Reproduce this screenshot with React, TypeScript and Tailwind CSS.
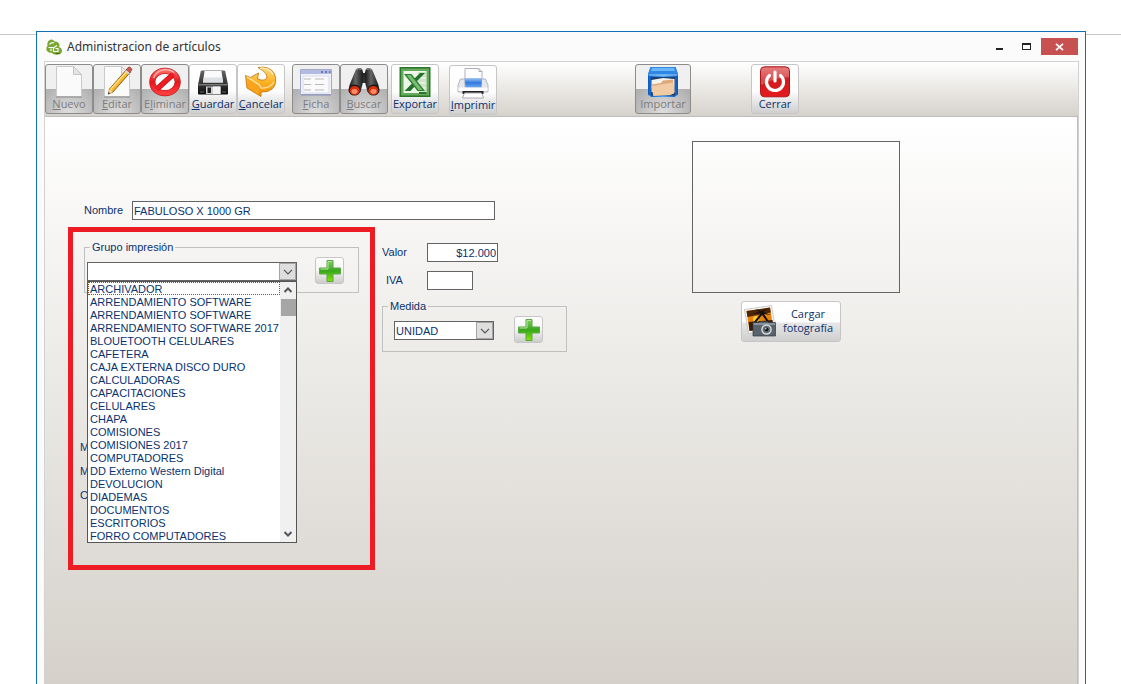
import React, { useState } from 'react';
import clsx from 'clsx';

const groups = [
  'ARCHIVADOR',
  'ARRENDAMIENTO SOFTWARE',
  'ARRENDAMIENTO SOFTWARE',
  'ARRENDAMIENTO SOFTWARE 2017',
  'BLOUETOOTH CELULARES',
  'CAFETERA',
  'CAJA EXTERNA DISCO DURO',
  'CALCULADORAS',
  'CAPACITACIONES',
  'CELULARES',
  'CHAPA',
  'COMISIONES',
  'COMISIONES 2017',
  'COMPUTADORES',
  'DD Externo Western Digital',
  'DEVOLUCION',
  'DIADEMAS',
  'DOCUMENTOS',
  'ESCRITORIOS',
  'FORRO COMPUTADORES',
];

const Svg: React.FC<{ children: React.ReactNode; className?: string }> = ({ children, className = 'h-8 w-8' }) => (
  <svg viewBox="0 0 32 32" className={clsx('block shrink-0', className)} fill="none" aria-hidden="true">
    {children}
  </svg>
);

const PaperIcon = () => (
  <Svg>
    <path d="M3.500 .5h17l8 8v22h-25z" fill="#fafafa" stroke="#c9c9c9" />
    <path d="M20.500 .5v8h8z" fill="#e6e6e6" stroke="#c4c4c4" />
    <path d="M3 31h26" stroke="#8c8c8c" />
  </Svg>
);

const EditIcon = () => (
  <Svg>
    <path d="M3.500 .5h17l8 8v22h-25z" fill="#fafafa" stroke="#c9c9c9" />
    <path d="M20.500 .5v8h8z" fill="#eee" stroke="#c4c4c4" />
    <path d="M3 31h26" stroke="#8c8c8c" />
    <path d="M8.500 23 26 3l3.500 3L12 26l-4.500 2z" fill="#f7b52c" stroke="#7d5310" strokeWidth=".9" />
    <path d="M9.500 23.500 27 4" stroke="#ffe487" strokeWidth="1.300" />
    <path d="m25 4 2-2.500q1-1 2.500 0l1 1q1 1 0 2L28.500 7z" fill="#c9574a" stroke="#7c3a30" strokeWidth=".6" />
    <path d="m23.800 5.500 1.400-1.600 3.500 3-1.400 1.600z" fill="#d4d6d9" />
    <path d="m8.300 23.300 3.500 2.700-4.600 2.300z" fill="#f3d5a5" />
    <path d="m7.600 26.300 1.600 1-2.400 1.300z" fill="#222" />
  </Svg>
);

const ForbidIcon = () => (
  <Svg>
    <defs>
      <linearGradient id="forbid" x1="0" y1="0" x2="0" y2="1">
        <stop offset="0" stopColor="#ff6a64" />
        <stop offset=".5" stopColor="#e8141b" />
        <stop offset="1" stopColor="#ff3b3e" />
      </linearGradient>
    </defs>
    <ellipse cx="16" cy="16" rx="12.500" ry="11" fill="#fff" fillOpacity=".7" />
    <ellipse cx="16" cy="16" rx="12.700" ry="11.300" stroke="#a80d12" strokeWidth="6" />
    <ellipse cx="16" cy="16" rx="12.700" ry="11.300" stroke="url(#forbid)" strokeWidth="5" />
    <path d="M8.500 22.500 23.500 9" stroke="#a80d12" strokeWidth="5.500" />
    <path d="M7.500 23.400 24.500 8.100" stroke="#ec1c22" strokeWidth="4.500" />
    <path d="M4.500 12Q8 4 16 3.600q6 0 9 3" stroke="#ffb7b2" strokeWidth="1.400" />
  </Svg>
);

const DiskIcon = () => (
  <Svg>
    <defs>
      <linearGradient id="disk" x1="0" y1="0" x2="0" y2="1">
        <stop offset="0" stopColor="#666" />
        <stop offset="1" stopColor="#0c0c0c" />
      </linearGradient>
    </defs>
    <path d="M5 4.500h22q1 0 1.300 1L31 19v8.500q0 1-1 1H2q-1 0-1-1V19L3.700 5.500q.3-1 1.300-1z" fill="url(#disk)" />
    <path d="M7.500 5h17l1.500 11.500H6z" fill="#fbfbfb" />
    <path d="M6.700 11.500h18.600l.7 5H6z" fill="#dde0e4" />
    <path d="M1.500 18.800h29" stroke="#8b8b8b" strokeWidth="1.200" />
    <path d="M9 20.500h14.500V28H9z" fill="#cfd1d2" />
    <path d="M10.500 21.500H14V27h-3.500z" fill="#222" />
    <path d="M16 20.500h7.500V28H16z" fill="#f3f3f3" />
    <path d="M3 26h4m18 0h4" stroke="#666" />
  </Svg>
);

const UndoIcon = () => (
  <Svg>
    <defs>
      <linearGradient id="undo" x1="0" y1="0" x2="0" y2="1">
        <stop offset="0" stopColor="#ffdc80" />
        <stop offset=".5" stopColor="#fdb225" />
        <stop offset="1" stopColor="#ef8c02" />
      </linearGradient>
    </defs>
    <path
      d="M13 1.500Q25-.5 29.500 8q3.500 9.500-2.500 15-4 3.500-11 3v4.500L2 22 .5 9.500l5 2L13.500 7l-1 6q6.500 2.500 9-.5Q24 7.500 13 1.500z"
      fill="url(#undo)"
      stroke="#c97b10"
      strokeWidth=".9"
      strokeLinejoin="round"
    />
    <path d="M2 11.500 14.500 19l-.8 9.500L3 21.500z" fill="#f9a41c" />
    <path d="M2 11l12.500 8 1.500 3q9 .5 13-6" stroke="#ffe9ae" strokeWidth="1.200" />
    <path d="M15 2.300q9-.8 13 6" stroke="#fff0c0" strokeWidth="1.300" />
  </Svg>
);

const FormIcon = () => (
  <Svg>
    <path d="M.5 3.500h31v25H.5z" fill="#f1f3fa" stroke="#a4aacb" />
    <path d="M1 4h30v4H1z" fill="#b4bbe0" />
    <path d="M21 6h2m2 0h2m2 0h1.500" stroke="#5962a8" strokeWidth="1.500" />
    <path d="M3 10h26v17H3z" fill="#fafafa" stroke="#d8dbea" />
    <path d="M4 13h7m4 0h9M4 18.500h7m4 0h9M4 24h7m4 0h9" stroke="#b7b9be" strokeWidth="1.200" />
    <path d="M1 29h30" stroke="#8990b5" />
  </Svg>
);

const BinocularsIcon = () => (
  <Svg>
    <defs>
      <linearGradient id="tube" x1="0" y1="0" x2="1" y2="0">
        <stop offset="0" stopColor="#111" />
        <stop offset=".45" stopColor="#666" />
        <stop offset="1" stopColor="#151515" />
      </linearGradient>
    </defs>
    <path d="M12.500 7h7v10h-7z" fill="#333" />
    <path d="M8 3.500q3-2.500 6-.5l1.500 5-1 10-2 8H.8L1.500 19 6 8z" fill="url(#tube)" />
    <path d="M18 3q3-2 6 .5L26 8l4.500 11 .7 7H19.500l-2-8-1-10z" fill="url(#tube)" />
    <path d="M8.500 3.500q2.500-1.500 5 0M18.500 3.500q2.500-1.500 5 0" stroke="#999" />
    <ellipse cx="6.500" cy="24" rx="6" ry="5.500" fill="#171717" />
    <ellipse cx="25.500" cy="24" rx="6" ry="5.500" fill="#171717" />
    <ellipse cx="6.700" cy="24.500" rx="5" ry="4.500" fill="#d9300f" />
    <ellipse cx="25.300" cy="24.500" rx="5" ry="4.500" fill="#d9300f" />
    <ellipse cx="6.500" cy="25.500" rx="3" ry="2.400" fill="#ff8a66" />
    <ellipse cx="25.500" cy="25.500" rx="3" ry="2.400" fill="#ff8a66" />
  </Svg>
);

const ExcelIcon = () => (
  <Svg>
    <path d="M.5 1h31v30H.5z" fill="#2a752c" />
    <path d="M2 2.500h28v27H2z" fill="#66a95a" />
    <path d="M4.500 5h23v22h-23z" fill="#edf6e8" />
    <path d="M19 6h8v20h-8z" fill="#cfe3c6" />
    <path d="M19 12h8m-8 5h8m-8 5h8" stroke="#f7fbf5" />
    <path d="M17.500 15.500 26 7h-5l-6 6zM13 17.500 5.500 25h6l4.500-5z" fill="#22702a" />
    <path d="M5 8h7.500L26 25h-7.500z" fill="#2a8034" />
    <path d="M7.500 9h4l12 15h-4z" fill="#7cbd72" />
    <path d="M20 26h7.500v2H20z" fill="#2a752c" />
  </Svg>
);

const PrinterIcon = () => (
  <Svg>
    <defs>
      <linearGradient id="print" x1="0" y1="0" x2="0" y2="1">
        <stop offset="0" stopColor="#a6c8f5" />
        <stop offset=".5" stopColor="#2f78dd" />
        <stop offset="1" stopColor="#6ea7f0" />
      </linearGradient>
    </defs>
    <path d="M8 1.500h14l3 3V14H8z" fill="#fdfdff" stroke="#b0b0bc" />
    <path d="M22 1.500v3h3" stroke="#a9a9b4" />
    <path d="M3.500 12H8v8h16.500v-8h4l2.500 6v7H1v-7z" fill="#e4e5ed" stroke="#a3a5b3" strokeWidth=".8" />
    <path d="M7.500 11h17.500l-1 9.500H8.500z" fill="url(#print)" />
    <path d="M1.500 20.500h29V24h-29z" fill="#fbfbfd" />
    <path d="M5.500 24h21v3h-21z" fill="#222" />
    <path d="M7.500 26h17l2 5h-21z" fill="#fff" stroke="#a9a9b4" />
  </Svg>
);

const ImportIcon = () => (
  <Svg>
    <defs>
      <linearGradient id="box" x1="0" y1="0" x2="1" y2="0">
        <stop offset="0" stopColor="#0c5cc0" />
        <stop offset=".5" stopColor="#4ba5f5" />
        <stop offset="1" stopColor="#1057b4" />
      </linearGradient>
    </defs>
    <path d="M3.500 1h25l2.500 7.500V28q0 1.500-2 1.500L28 31H4l-1-1.500q-2 0-2-1.500V8.500z" fill="url(#box)" />
    <path d="M3.500 1h25L31 8.500H1z" fill="#2f86e4" />
    <path d="M5 2h22l1 3H4z" fill="#6ab6f8" />
    <path d="M1.500 9h29" stroke="#a2d6ff" />
    <path d="M4 11h24v18.500H4z" fill="#1b3f70" />
    <path d="M4.500 14 16 12l11.500 1v13h-23z" fill="#f3f3ee" />
    <path d="M5 18.500 14 17l2-2.500 10-1 1 14-21 2z" fill="#dfa878" />
    <path d="m4.500 20 21-3.500 2 10.500-4 2-17 1z" fill="#f0cba4" />
  </Svg>
);

const PowerIcon = () => (
  <Svg>
    <defs>
      <linearGradient id="power" x1="0" y1="0" x2="0" y2="1">
        <stop offset="0" stopColor="#dd5d59" />
        <stop offset=".45" stopColor="#cf1b1d" />
        <stop offset="1" stopColor="#e5191c" />
      </linearGradient>
    </defs>
    <rect x="1.500" y=".8" width="29" height="30" rx="4" fill="url(#power)" stroke="#ad1518" />
    <path d="M2 5q0-3.500 4-3.500h20q4 0 4 3.500v6Q16 12 2 19z" fill="#fff" fillOpacity=".22" />
    <path d="M10.500 9.500a8.500 8.500 0 1 0 11 0" stroke="#fff" strokeWidth="3.200" strokeLinecap="round" />
    <path d="M16 6v9" stroke="#fff" strokeWidth="3.200" strokeLinecap="round" />
  </Svg>
);

const PhotoIcon = () => (
  <Svg>
    <path d="m.5 4.500 27-4 4 24-27 4z" fill="#f7f7f7" stroke="#b6b6b6" strokeWidth=".7" />
    <path d="m2.500 6 23.500-3.500 3.300 20L5.500 26z" fill="#e8830c" />
    <path d="m2.500 6 23.500-3.500.8 5L3.500 12z" fill="#4d2508" />
    <path d="m4.500 17 24-2 1 7.500L5.500 26z" fill="#381d08" />
    <circle cx="12" cy="14" r="3" fill="#ffcf3a" />
    <path d="M17 8 9 18l1 2 8-10 6 8h2l-6-9 7 1-8-3 4-3-6 2-5-2 3 3-7 2z" fill="#111" />
    <path d="M9 17.500h6l1-1h8l1 1h6.500V31H9z" fill="#59636d" stroke="#353c43" strokeWidth=".7" />
    <path d="M9.500 18h21.500v2H9.500z" fill="#87929c" />
    <circle cx="22.500" cy="24.500" r="5.300" fill="#d5d9dc" />
    <circle cx="22.500" cy="24.500" r="3.800" fill="#67717a" />
    <circle cx="22.500" cy="24.500" r="2" fill="#15191e" />
    <circle cx="21.800" cy="23.800" r=".7" fill="#fff" />
  </Svg>
);

const LeafLogo = () => (
  <svg viewBox="0 0 16 16" className="block h-4 w-4" aria-hidden="true">
    <path
      d="M3.500 1Q7-.5 8.500 2.500q3-.5 4.500 2 1 2 0 3.500 3 1 3 4t-4.500 3.700q-4 .3-6-2-3.500.3-4.800-2.200-1-3 .8-4.500Q.5 3 3.500 1z"
      fill="#78a832"
    />
    <path d="M3.500 5.500q2-2.500 4.500-1.500M2.500 8.500h5.500l3-2M5 12V9.500M7.500 8.500v4h4.500v-3H9.500" stroke="#fff" strokeWidth="1.200" fill="none" />
    <path d="M9.500 14.500H14" stroke="#43701a" />
  </svg>
);

interface ToolButtonProps {
  label: string;
  hotkey?: number;
  icon: React.ReactNode;
  disabled?: boolean;
  className?: string;
}

const ToolButton: React.FC<ToolButtonProps> = ({ label, hotkey, icon, disabled, className = 'w-12' }) => (
  <button
    type="button"
    disabled={disabled}
    className={clsx(
      'flex h-[50px] shrink-0 flex-col items-center rounded-[3px] border pt-px font-["Open_Sans","Noto_Sans",sans-serif] text-[11px] leading-3 whitespace-nowrap',
      disabled
        ? 'border-[#8c8c8c] bg-[linear-gradient(#f0f0f0_50%,transparent_50%),radial-gradient(circle_at_50%_100%,#dedede,#acacac_65%)] text-[#7d7d7d]'
        : 'border-[#c6c6c6] bg-[linear-gradient(#ffffff_0%,#fdfdfd_55%,#ececec_70%,#cfcfcf_100%)] text-[#0b2f6b]',
      className,
    )}
  >
    {icon}
    <span>
      {hotkey === undefined ? (
        label
      ) : (
        <>
          {label.slice(0, hotkey)}
          <u>{label[hotkey]}</u>
          {label.slice(hotkey + 1)}
        </>
      )}
    </span>
  </button>
);

const AddButton: React.FC<{ label: string }> = ({ label }) => (
  <button
    type="button"
    aria-label={label}
    className="flex h-[27px] w-[29px] items-center justify-center rounded-[3px] border border-[#c6c6c6] bg-linear-to-b from-white via-[#f4f4f4] to-[#cccccc]"
  >
    <svg viewBox="0 0 24 24" className="h-6 w-6" aria-hidden="true">
      <defs>
        <linearGradient id="plus" x1="0" y1="0" x2="0" y2="1">
          <stop offset="0" stopColor="#83cf62" />
          <stop offset=".5" stopColor="#38a71c" />
          <stop offset="1" stopColor="#83e900" />
        </linearGradient>
      </defs>
      <path d="M9 1.500h6v7.500h7.500v6H15v7.500H9V15H1.500V9H9z" fill="url(#plus)" stroke="#5aa545" strokeLinejoin="round" />
      <path d="M10 10V2.500h4M2.500 10H10" stroke="#b6e6a0" fill="none" />
    </svg>
  </button>
);

const ComboArrow = () => (
  <span className="pointer-events-none absolute inset-y-px right-px flex w-[17px] items-center justify-center border border-[#a5a5a5] bg-[#dedede]">
    <svg viewBox="0 0 10 6" className="h-1.5 w-2.5" aria-hidden="true">
      <path d="m1 .8 4 4 4-4" stroke="#555" strokeWidth="1.200" fill="none" />
    </svg>
  </span>
);

const fieldClass = 'h-[19px] border border-[#646464] bg-white px-px text-[11px] leading-4 outline-none';

const App: React.FC = () => {
  const [name, setName] = useState('FABULOSO X 1000 GR');
  const [value, setValue] = useState('$12.000');
  const [tax, setTax] = useState('');
  const [group, setGroup] = useState('');

  return (
    <div className="flex h-screen overflow-hidden bg-white font-['Liberation_Sans',Arial,sans-serif] text-[11px] leading-[13px] text-[#0a326e]">
      <div className="mt-[34px] w-9 shrink-0 border-t border-[#c8c8c8]" />

      <div className="mt-[31px] flex min-w-0 flex-1 flex-col border border-b-0 border-[#0f70b7] bg-[#fbfbfb] pr-1.5 pl-[7px]">
        {/* Title bar */}
        <header className="flex h-[29px] shrink-0 items-center pr-px pl-0.5">
          <LeafLogo />
          <h1 className="pl-[5px] font-['Noto_Sans','Open_Sans',sans-serif] text-xs leading-4 text-[#333]">
            Administracion de artículos
          </h1>
          <div className="ml-auto flex items-center">
            <button type="button" aria-label="Minimizar" className="flex h-[17px] w-[27px] items-center justify-center">
              <span className="mt-1 h-0.5 w-[7px] bg-[#222]" />
            </button>
            <button type="button" aria-label="Maximizar" className="flex h-[17px] w-[27px] items-center justify-center">
              <span className="h-[7px] w-[9px] border border-t-2 border-[#222]" />
            </button>
            <button type="button" aria-label="Cerrar ventana" className="ml-px flex h-[17px] w-[37px] items-center justify-center bg-[#c75050]">
              <svg viewBox="0 0 9 8" className="h-2 w-[9px]" aria-hidden="true">
                <path d="m1 .8 7 6.400M8 .8 1 7.200" stroke="#fff" strokeWidth="1.700" />
              </svg>
            </button>
          </div>
        </header>

        <div className="flex min-h-0 flex-1 flex-col border border-b-0 border-[#d2d2d2]">
          {/* Toolbar */}
          <div className="flex h-[54px] shrink-0 items-start bg-linear-to-b from-white to-[#d6d2cb] pt-0.5">
            <ToolButton label="Nuevo" hotkey={0} icon={<PaperIcon />} disabled />
            <ToolButton label="Editar" hotkey={0} icon={<EditIcon />} disabled />
            <ToolButton label="Eliminar" hotkey={1} icon={<ForbidIcon />} disabled />
            <ToolButton label="Guardar" hotkey={0} icon={<DiskIcon />} />
            <ToolButton label="Cancelar" hotkey={0} icon={<UndoIcon />} />
            <ToolButton label="Ficha" hotkey={0} icon={<FormIcon />} disabled className="ml-[7px] w-12" />
            <ToolButton label="Buscar" hotkey={0} icon={<BinocularsIcon />} disabled />
            <ToolButton label="Exportar" icon={<ExcelIcon />} className="ml-[3px] w-12" />
            <ToolButton label="Imprimir" hotkey={0} icon={<PrinterIcon />} className="mt-px ml-2.5 w-12" />
            <ToolButton label="Importar" icon={<ImportIcon />} disabled className="ml-[138px] w-14" />
            <ToolButton label="Cerrar" icon={<PowerIcon />} className="ml-[60px] w-12" />
          </div>

          {/* Form */}
          <main className="flex min-h-0 flex-1 items-start border-t border-r border-[#bdbdbd] bg-linear-to-b from-white to-[#d5d1ca] pt-6 pl-[23px]">
            <div className="relative mt-[60px] w-[500px] shrink-0 pl-4">
              <div className="flex items-center">
                <label htmlFor="nombre" className="w-12">
                  Nombre
                </label>
                <input
                  id="nombre"
                  value={name}
                  onChange={(e) => setName(e.target.value)}
                  className={clsx(fieldClass, 'w-[363px]')}
                />
              </div>

              <div className="flex items-start gap-[23px] pt-[21px]">
                <fieldset className="h-[52px] w-[275px] border border-[#c0c0c0] pl-0.5">
                  <legend className="ml-[3px] px-0.5">Grupo impresión</legend>
                  <div className="flex items-start pt-[3px]">
                    <div className="relative mt-[5px] w-[210px]">
                      <select
                        aria-label="Grupo impresión"
                        value={group}
                        onChange={(e) => setGroup(e.target.value)}
                        className={clsx(fieldClass, 'block w-full appearance-none')}
                      >
                        <option value="" />
                        {groups.map((item, i) => (
                          <option key={i}>{item}</option>
                        ))}
                      </select>
                      <ComboArrow />
                      <div className="absolute top-full left-0 z-10 flex w-full border border-[#555] bg-white">
                        <ul role="listbox" aria-label="Grupos" className="min-w-0 flex-1 leading-[15px] whitespace-nowrap">
                          {groups.map((item, i) => (
                            <li
                              key={i}
                              role="option"
                              aria-selected={item === group}
                              onClick={() => setGroup(item)}
                              className={clsx(
                                'h-[13px] pl-0.5',
                                i === 0 && 'outline-1 -outline-offset-1 outline-[#8a5a10] outline-dotted',
                              )}
                            >
                              {item}
                            </li>
                          ))}
                        </ul>
                        <div className="flex w-4 flex-col items-center bg-[#f0f0f0]">
                          <svg viewBox="0 0 10 6" className="my-[5px] h-1.5 w-2.5" aria-hidden="true">
                            <path d="m1.500 5 3.500-3.500L8.500 5" stroke="#555" strokeWidth="2" fill="none" />
                          </svg>
                          <span className="mt-px h-[17px] w-[15px] bg-[#a6a6a6]" />
                          <svg viewBox="0 0 10 6" className="mt-auto mb-[5px] h-1.5 w-2.5" aria-hidden="true">
                            <path d="m1.500 1 3.500 3.500L8.500 1" stroke="#555" strokeWidth="2" fill="none" />
                          </svg>
                        </div>
                      </div>
                    </div>
                    <div className="pl-[18px]">
                      <AddButton label="Agregar grupo" />
                    </div>
                  </div>
                </fieldset>

                <div className="w-[185px] pt-0.5">
                  <div className="flex items-center">
                    <label htmlFor="valor" className="w-[45px]">
                      Valor
                    </label>
                    <input
                      id="valor"
                      value={value}
                      onChange={(e) => setValue(e.target.value)}
                      className={clsx(fieldClass, 'w-[71px] text-right')}
                    />
                  </div>
                  <div className="flex items-center pt-[9px]">
                    <label htmlFor="iva" className="w-[45px] pl-1">
                      IVA
                    </label>
                    <input
                      id="iva"
                      value={tax}
                      onChange={(e) => setTax(e.target.value)}
                      className={clsx(fieldClass, 'w-[46px]')}
                    />
                  </div>
                  <fieldset className="mt-2.5 h-[52px] border border-[#c0c0c0] pl-[11px]">
                    <legend className="-ml-1.5 px-0.5">Medida</legend>
                    <div className="flex items-start gap-5 pt-[3px]">
                      <div className="relative mt-[5px] w-[100px]">
                        <select aria-label="Medida" className={clsx(fieldClass, 'block w-full appearance-none')}>
                          <option>UNIDAD</option>
                        </select>
                        <ComboArrow />
                      </div>
                      <AddButton label="Agregar medida" />
                    </div>
                  </fieldset>
                </div>
              </div>

              <div className="-ml-1 flex flex-col gap-[11px] pt-[89px]">
                <span>M</span>
                <span>M</span>
                <span>C</span>
              </div>

              {/* Highlight around the group selector */}
              <div className="pointer-events-none absolute top-[26px] left-0 z-20 h-[343px] w-[307px] border-5 border-[#ed1c24]" />
            </div>

            <div className="ml-[124px] flex w-[208px] flex-col items-center gap-2">
              <div className="h-[152px] w-full border border-[#646464]" />
              <button
                type="button"
                className="-ml-2.5 flex h-[41px] w-[100px] items-center rounded-[3px] border border-[#c6c6c6] bg-[linear-gradient(#ffffff_0%,#fdfdfd_50%,#e6e6e6_55%,#cfcfcf_100%)] pb-px pl-0.5 font-['Open_Sans','Noto_Sans',sans-serif] text-[11px] leading-[14px]"
              >
                <PhotoIcon />
                <span className="flex-1">
                  Cargar
                  <br />
                  fotografía
                </span>
              </button>
            </div>
          </main>
        </div>
      </div>

      <div className="mt-[34px] w-[35px] shrink-0 border-t border-[#c8c8c8]" />
    </div>
  );
};

export default App;
